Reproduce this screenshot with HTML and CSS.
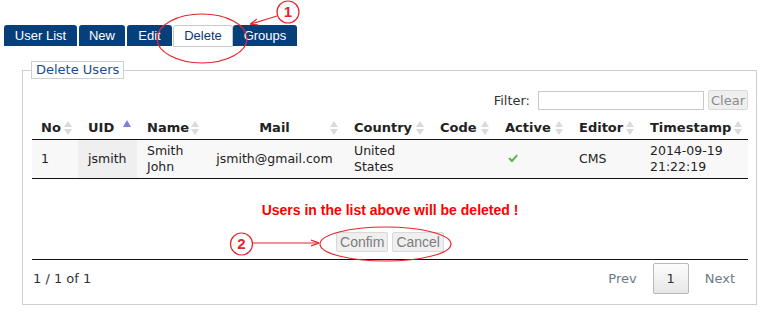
FILE: index.html
```html
<!DOCTYPE html>
<html lang="en">
<head>
  <meta charset="UTF-8">
  <title>Delete Users</title>
  <link rel="stylesheet" href="styles.css">
</head>
<body>

  <ul class="tabs">
    <li class="tab tab-list">User List</li>
    <li class="tab tab-new">New</li>
    <li class="tab tab-edit">Edit</li>
    <li class="tab tab-delete active">Delete</li>
    <li class="tab tab-groups">Groups</li>
  </ul>

  <fieldset class="panel">
    <legend>Delete Users</legend>

    <div class="filter">
      <label>Filter:</label>
      <input type="text">
      <button class="btn" disabled>Clear</button>
    </div>

    <table class="users">
      <colgroup>
        <col style="width:46px"><col style="width:59px"><col style="width:68px">
        <col style="width:139px"><col style="width:86px"><col style="width:65px">
        <col style="width:74px"><col style="width:71px"><col style="width:108px">
      </colgroup>
      <thead>
        <tr>
          <th>No<span class="sort"></span></th>
          <th>UID<span class="sort asc"></span></th>
          <th>Name<span class="sort"></span></th>
          <th class="center">Mail<span class="sort"></span></th>
          <th>Country<span class="sort"></span></th>
          <th>Code<span class="sort"></span></th>
          <th>Active<span class="sort"></span></th>
          <th>Editor<span class="sort"></span></th>
          <th>Timestamp<span class="sort"></span></th>
        </tr>
      </thead>
      <tbody>
        <tr>
          <td>1</td>
          <td class="sorted">jsmith</td>
          <td>Smith<br>John</td>
          <td class="center">jsmith@gmail.com</td>
          <td>United<br>States</td>
          <td></td>
          <td>
            <svg class="check" width="10" height="9" viewBox="0 0 10 9">
              <path d="M0.3 4.8 L2.2 3.4 L3.9 5.4 L8.6 0.4 L9.9 1.7 L4 8.6 Z" fill="#5fae4f"/>
            </svg>
          </td>
          <td>CMS</td>
          <td>2014-09-19<br>21:22:19</td>
        </tr>
      </tbody>
    </table>

    <p class="warning">Users in the list above will be deleted !</p>

    <div class="actions">
      <button class="btn" disabled>Confim</button>
      <button class="btn" disabled>Cancel</button>
    </div>

    <div class="pager">
      <span class="count">1 / 1 of 1</span>
      <div class="pages">
        <span class="page-link">Prev</span>
        <span class="page-num">1</span>
        <span class="page-link">Next</span>
      </div>
    </div>
  </fieldset>

  <!-- annotation marks drawn over the screenshot -->
  <svg class="marks" width="767" height="320" viewBox="0 0 767 320">
    <defs>
      <marker id="head" markerWidth="8" markerHeight="8" refX="7" refY="4" orient="auto" markerUnits="userSpaceOnUse">
        <path d="M0 1 L8 4 L0 7" fill="none" stroke="#e3262c" stroke-width="1.2"/>
      </marker>
    </defs>
    <circle cx="288" cy="12" r="11" fill="#fff" stroke="#e3262c" stroke-width="1.2"/>
    <text x="288" y="17" class="num">1</text>
    <line x1="277" y1="16" x2="251" y2="24" stroke="#e3262c" stroke-width="1.2" marker-end="url(#head)"/>
    <ellipse cx="202" cy="38.5" rx="45" ry="24.5" fill="none" stroke="#e3262c" stroke-width="1.2"/>

    <circle cx="241.5" cy="244" r="11" fill="#fff" stroke="#e3262c" stroke-width="1.2"/>
    <text x="241.5" y="249" class="num">2</text>
    <line x1="253" y1="243" x2="318" y2="243" stroke="#e3262c" stroke-width="1.2" marker-end="url(#head)"/>
    <ellipse cx="385.5" cy="244" rx="65.5" ry="17" fill="none" stroke="#e3262c" stroke-width="1.2"/>
  </svg>

</body>
</html>
```

FILE: styles.css
```css
* {
  box-sizing: border-box;
}
body {
  margin: 0;
  font-family: 'DejaVu Sans', Verdana, sans-serif;
  font-size: 13px;
  color: #222;
  background-color: #fff;
  position: relative;
  width: 767px;
  height: 320px;
  overflow: hidden;
}
.tabs {
  list-style: none;
  margin: 0;
  padding: 25px 0 0 4px;
  display: flex;
  height: 47px;
}
.tab {
  font-family: 'Liberation Sans', Arial, sans-serif;
  font-size: 13px;
  color: #fff;
  background-color: #073f7a;
  height: 21px;
  line-height: 21px;
  text-align: center;
  border-radius: 3px 3px 0 0;
}
.tab-list { width: 73px; margin-right: 2px; }
.tab-new { width: 46px; margin-right: 2px; }
.tab-edit { width: 45px; margin-right: 1px; }
.tab-delete { width: 60px; }
.tab-groups { width: 64px; }
.tab.active {
  background-color: #fff;
  color: #0c3a74;
  border: 1px solid #c8c8c8;
  height: 22px;
  line-height: 20px;
}
.panel {
  margin: 14px 10px 0 22px;
  padding: 11px 8px 9px 9px;
  border: 1px solid #cfcfcf;
  height: 244px;
}
.panel legend {
  font-size: 13px;
  color: #1b4c8c;
  border: 1px solid #cfcfcf;
  padding: 0 4px;
  margin-left: -1px;
  height: 18px;
  line-height: 16px;
}
.filter {
  display: flex;
  justify-content: flex-end;
  align-items: center;
  gap: 4px;
  height: 20px;
}
.filter label {
  color: #333;
  margin-right: 4px;
}
.filter input {
  width: 166px;
  height: 19px;
  border: 1px solid #c9c9c9;
  margin: 0;
}
.btn {
  font-family: 'DejaVu Sans', Verdana, sans-serif;
  font-size: 13px;
  color: #8a8a8a;
  background-color: #efefef;
  border: 1px solid #d9d9d9;
  border-radius: 2px;
  height: 20px;
  padding: 0 2px;
  margin: 0;
}
.users {
  width: 716px;
  margin-top: 8px;
  table-layout: fixed;
  border-collapse: collapse;
}
.users th {
  font-weight: bold;
  text-align: left;
  padding: 0 0 0 10px;
  height: 21px;
  line-height: 20px;
  border-bottom: 1px solid #111;
  position: relative;
  white-space: nowrap;
}
.users td {
  background-color: #f8f8f8;
  padding: 3px 0 3px 10px;
  font-size: 12.5px;
  line-height: 16px;
  height: 39px;
  border-bottom: 1px solid #111;
  color: #222;
}
.users th:first-child,
.users td:first-child {
  padding-left: 9px;
}
.users td.sorted {
  background-color: #efefef;
}
.users .center {
  text-align: center;
  padding-left: 0;
}
.sort {
  position: absolute;
  right: 6px;
  top: 2px;
  width: 8px;
  height: 15px;
}
.sort::before,
.sort::after {
  content: '';
  position: absolute;
  left: 0;
  border-left: 4px solid transparent;
  border-right: 4px solid transparent;
}
.sort::before {
  top: 1px;
  border-bottom: 6px solid #dadada;
}
.sort::after {
  top: 9px;
  border-top: 6px solid #dadada;
}
.sort.asc::before {
  border-bottom-width: 7px;
  border-bottom-color: #8080e0;
  top: 0;
}
.sort.asc::after {
  display: none;
}
.check {
  display: block;
  margin-left: 3px;
}
.warning {
  font-family: 'Liberation Sans', Arial, sans-serif;
  font-weight: bold;
  font-size: 14px;
  color: #f00;
  text-align: center;
  margin: 23px 0 0 0;
  height: 16px;
  line-height: 16px;
}
.actions {
  display: flex;
  justify-content: center;
  gap: 4px;
  margin: 14px 0 0 0;
  padding-bottom: 7px;
  border-bottom: 1px solid #111;
}
.actions .btn {
  font-family: 'Liberation Sans', Arial, sans-serif;
  font-size: 14px;
  height: 20px;
  padding: 0 3px;
  color: #7c7c7c;
}
.pager {
  display: flex;
  justify-content: space-between;
  align-items: center;
  height: 35px;
  padding-top: 3px;
}
.count {
  padding-left: 1px;
  color: #333;
}
.pages {
  display: flex;
  align-items: center;
  gap: 16px;
  padding-right: 13px;
}
.page-link {
  color: #6b7a88;
}
.page-num {
  width: 36px;
  height: 31px;
  line-height: 29px;
  text-align: center;
  border: 1px solid #b8b8b8;
  border-radius: 2px;
  background: linear-gradient(#fdfdfd, #e6e6e6);
  color: #333;
}
.marks {
  position: absolute;
  left: 0;
  top: 0;
  pointer-events: none;
}
.marks .num {
  font-family: 'Liberation Sans', Arial, sans-serif;
  font-weight: bold;
  font-size: 15px;
  fill: #e3262c;
  text-anchor: middle;
}
```
